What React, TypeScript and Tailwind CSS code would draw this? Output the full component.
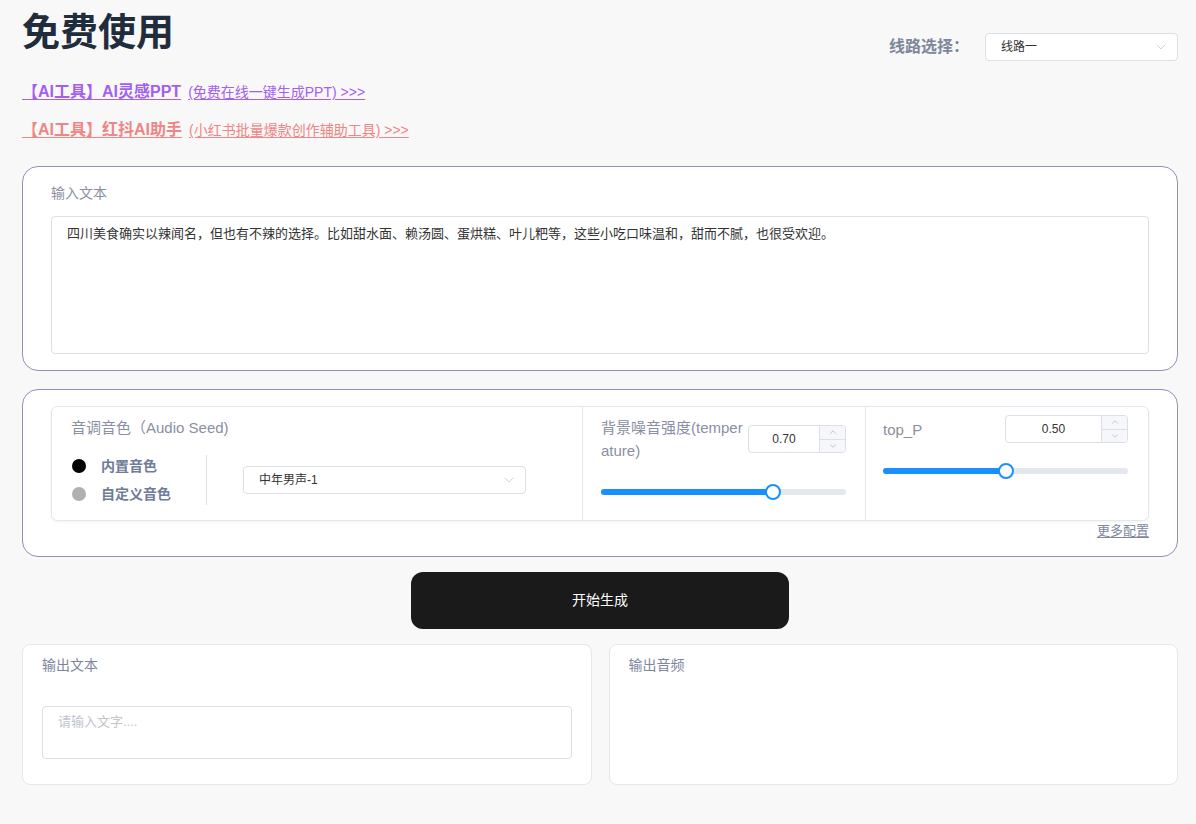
import { ChevronDown, ChevronUp } from "lucide-react"

const font = "font-['Liberation_Sans','Noto_Sans_CJK_SC',sans-serif]"

function NumberBox({ value, width }: { value: string; width: string }) {
  return (
    <div className={`flex h-[28px] ${width} overflow-hidden rounded-[4px] border border-[#dcdfe6] bg-white`}>
      <div className="flex flex-1 items-center justify-center text-[12px] text-[#333]">{value}</div>
      <div className="flex w-[26px] flex-col border-l border-[#dcdfe6] bg-[#f5f7fa] text-[#a0a4ad]">
        <div className="flex flex-1 items-center justify-center border-b border-[#dcdfe6]">
          <ChevronUp size={10} strokeWidth={1.5} />
        </div>
        <div className="flex flex-1 items-center justify-center">
          <ChevronDown size={10} strokeWidth={1.5} />
        </div>
      </div>
    </div>
  )
}

function Slider({ percent }: { percent: number }) {
  return (
    <div className="relative h-[16px] w-full">
      <div className="absolute left-0 right-0 top-[5px] h-[6px] rounded-full bg-[#e4e7ed]" />
      <div className="absolute left-0 top-[5px] h-[6px] rounded-full bg-[#1890ff]" style={{ width: `${percent}%` }} />
      <div
        className="absolute top-0 h-[16px] w-[16px] -translate-x-1/2 rounded-full border-2 border-[#1890ff] bg-white"
        style={{ left: `${percent}%` }}
      />
    </div>
  )
}

export default function App() {
  return (
    <div className={`min-h-screen bg-[#f8f8f8] pb-[39px] pl-[22px] pr-[18px] ${font}`}>
      <div className="flex items-start justify-between">
        <h1 className="pt-[9px] text-[38px] font-bold leading-[46px] text-[#1f2d3d]">免费使用</h1>
        <div className="mt-[33px] flex items-center">
          <span className="text-[16px] font-bold text-[#7d879c]">线路选择：</span>
          <div className="ml-[16px] flex h-[28px] w-[193px] items-center justify-between rounded-[4px] border border-[#dcdfe6] bg-white pl-[15px] pr-[8px] text-[12px] text-[#333]">
            <span>线路一</span>
            <ChevronDown size={16} strokeWidth={1.1} className="text-[#c0c4cc]" />
          </div>
        </div>
      </div>

      <div className="mt-[19px] flex items-baseline gap-[7px] text-[#a25ff2]">
        <a className="text-[16px] font-bold underline underline-offset-2">【AI工具】AI灵感PPT</a>
        <a className="text-[14px] underline underline-offset-2">(免费在线一键生成PPT) &gt;&gt;&gt;</a>
      </div>
      <div className="mt-[14px] flex items-baseline gap-[7px] text-[#ef8585]">
        <a className="text-[16px] font-bold underline underline-offset-2">【AI工具】红抖AI助手</a>
        <a className="text-[14px] underline underline-offset-2">(小红书批量爆款创作辅助工具) &gt;&gt;&gt;</a>
      </div>

      <section className="mt-[24px] rounded-[16px] border border-[#8c93b5] bg-white px-[28px] pb-[16px] pt-[16px]">
        <p className="text-[14px] leading-[20px] text-[#8a8fa3]">输入文本</p>
        <div className="mt-[13px] h-[138px] rounded-[4px] border border-[#dcdfe6] px-[15px] py-[7px] text-[13px] leading-[20px] text-[#333]">
          四川美食确实以辣闻名，但也有不辣的选择。比如甜水面、赖汤圆、蛋烘糕、叶儿粑等，这些小吃口味温和，甜而不腻，也很受欢迎。
        </div>
      </section>

      <section className="mt-[18px] rounded-[16px] border border-[#8c93b5] bg-white px-[28px] pb-[16px] pt-[16px]">
        <div className="grid h-[115px] grid-cols-[530px_283px_1fr] rounded-[6px] border border-[#e4e7ed] shadow-[0_1px_3px_rgba(0,0,0,0.06)]">
          <div className="px-[19px] pt-[10px]">
            <p className="text-[15px] leading-[22px] text-[#8a8fa3]">音调音色（Audio Seed)</p>
            <div className="mt-[16px] flex items-center">
              <div className="flex flex-col gap-[12px]">
                <div className="flex items-center gap-[15px]">
                  <span className="ml-[1px] h-[14px] w-[14px] rounded-full bg-black" />
                  <span className="text-[14px] font-bold leading-[16px] text-[#6f7c99]">内置音色</span>
                </div>
                <div className="flex items-center gap-[15px]">
                  <span className="ml-[1px] h-[14px] w-[14px] rounded-full bg-[#b0b0b0]" />
                  <span className="text-[14px] font-bold leading-[16px] text-[#6f7c99]">自定义音色</span>
                </div>
              </div>
              <div className="ml-[35px] h-[50px] w-px bg-[#dcdfe6]" />
              <div className="ml-[36px] flex h-[28px] w-[283px] items-center justify-between rounded-[4px] border border-[#dcdfe6] bg-white pl-[15px] pr-[8px] text-[12px] text-[#333]">
                <span>中年男声-1</span>
                <ChevronDown size={16} strokeWidth={1.1} className="text-[#c0c4cc]" />
              </div>
            </div>
          </div>

          <div className="border-l border-[#e4e7ed] pl-[18px] pr-[19px] pt-[9px]">
            <div className="flex items-start justify-between">
              <p className="w-[146px] break-all text-[15px] leading-[23px] text-[#8a8fa3]">背景噪音强度(temperature)</p>
              <div className="mt-[9px]">
                <NumberBox value="0.70" width="w-[98px]" />
              </div>
            </div>
            <div className="mt-[22px]">
              <Slider percent={70} />
            </div>
          </div>

          <div className="border-l border-[#e4e7ed] pl-[17px] pr-[20px] pt-[8px]">
            <div className="flex items-center justify-between">
              <p className="text-[15px] leading-[23px] text-[#8a8fa3]">top_P</p>
              <NumberBox value="0.50" width="w-[123px]" />
            </div>
            <div className="mt-[20px]">
              <Slider percent={50} />
            </div>
          </div>
        </div>
        <div className="mt-[1px] flex justify-end">
          <a className="text-[13px] leading-[18px] text-[#7d879c] underline underline-offset-2">更多配置</a>
        </div>
      </section>

      <div className="mt-[15px] flex justify-center">
        <button className="h-[57px] w-[378px] rounded-[12px] bg-[#1a1a1a] text-[14px] text-white">开始生成</button>
      </div>

      <div className="mt-[15px] grid grid-cols-2 gap-[17px]">
        <section className="h-[141px] rounded-[8px] border border-[#e4e7ed] bg-white px-[19px] pt-[10px]">
          <p className="text-[14px] leading-[20px] text-[#7d879c]">输出文本</p>
          <div className="mt-[31px] h-[53px] rounded-[4px] border border-[#dcdfe6] px-[15px] py-[5px] text-[13px] leading-[20px] text-[#c0c4cc]">
            请输入文字....
          </div>
        </section>
        <section className="h-[141px] rounded-[8px] border border-[#e4e7ed] bg-white px-[19px] pt-[10px]">
          <p className="text-[14px] leading-[20px] text-[#7d879c]">输出音频</p>
        </section>
      </div>
    </div>
  )
}
